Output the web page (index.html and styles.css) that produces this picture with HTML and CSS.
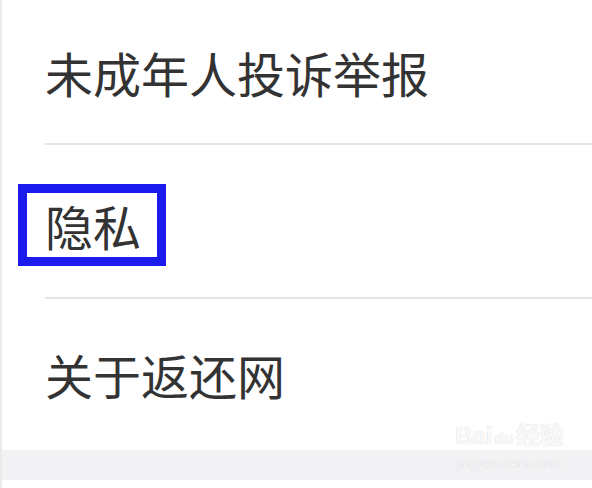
FILE: index.html
```html
<!DOCTYPE html>
<html lang="zh-CN">
<head>
    <meta charset="UTF-8">
    <meta name="viewport" content="width=device-width, initial-scale=1.0">
    <title>设置</title>
    <link rel="stylesheet" href="styles.css">
</head>
<body>
    <div class="page">
        <ul class="menu">
            <li class="menu-item"><span class="label">未成年人投诉举报</span></li>
            <li class="menu-item"><span class="label marked">隐私</span></li>
            <li class="menu-item last"><span class="label">关于返还网</span></li>
        </ul>
        <div class="footer-band"></div>
        <div class="watermark">
            <div class="wm-logo">Bai<span class="wm-paw">du</span>经验</div>
            <div class="wm-url">jingyan.baidu.com</div>
        </div>
    </div>
</body>
</html>
```

FILE: styles.css
```css
* {
    margin: 0;
    padding: 0;
    box-sizing: border-box;
}

body {
    background-color: #fff;
    font-family: "Noto Sans CJK SC", "Noto Sans", sans-serif;
    color: #333;
}

.page {
    position: relative;
    width: 592px;
    height: 488px;
    overflow: hidden;
    border-left: 2px solid #ebebeb;
}

.menu {
    list-style: none;
    margin-left: 43px;
}

.menu-item {
    font-size: 48px;
    line-height: 48px;
    height: 145px;
    padding-top: 48px;
    border-bottom: 2px solid #e4e4e4;
}

.menu-item:nth-child(2) {
    height: 154px;
    padding-top: 56px;
}

.menu-item.last {
    height: 151px;
    padding-top: 51px;
    border-bottom: none;
}

.label {
    display: inline-block;
    vertical-align: top;
}

.marked {
    position: relative;
}

.marked::after {
    content: "";
    position: absolute;
    top: -17px;
    bottom: -17px;
    left: -27px;
    right: -25px;
    border: 9px solid #1b1bee;
}

.footer-band {
    height: 30px;
    background-color: #f3f3f5;
}

.watermark {
    position: absolute;
    left: 453px;
    top: 420px;
    white-space: nowrap;
    color: rgba(255, 255, 255, 0.9);
    text-shadow: 0 0 1px rgba(150, 150, 160, 0.5);
    font-family: "Liberation Sans", "Noto Sans CJK SC", sans-serif;
    text-align: center;
}

.wm-logo {
    font-size: 24px;
    font-weight: bold;
    line-height: 32px;
}

.wm-paw {
    font-size: 16px;
    margin: 0 2px;
}

.wm-url {
    font-size: 13px;
    line-height: 18px;
}
```
